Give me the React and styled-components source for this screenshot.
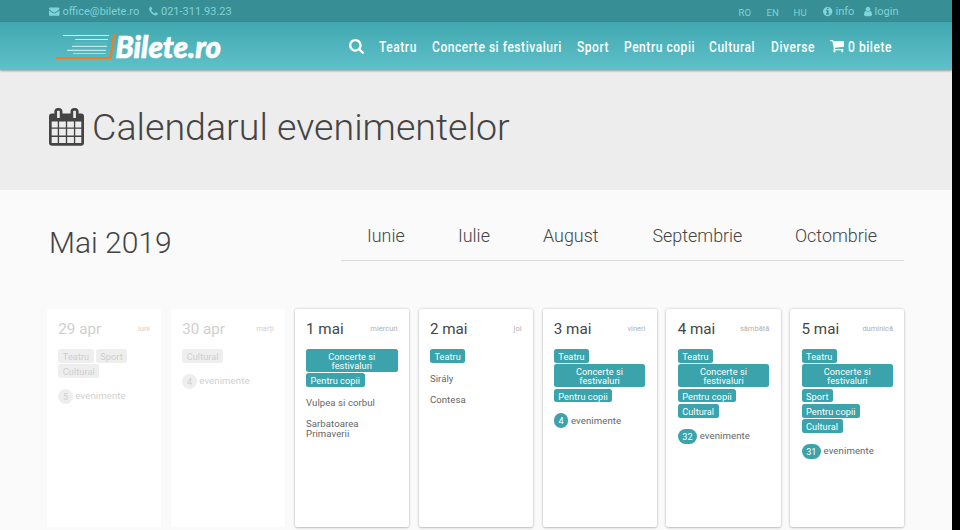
import React from "react";
import styled, { createGlobalStyle } from "styled-components";

const Global = createGlobalStyle`
  * { box-sizing: border-box; }
  html, body { margin: 0; height: 530px; overflow: hidden; background: #000; }
  body { font-family: Roboto, sans-serif; color: #444; }
`;

const Page = styled.div`
  width: 952px;
  height: 530px;
  overflow: hidden;
  background: #fafafa;
  display: flex;
  flex-direction: column;
`;

const TopBar = styled.div`
  height: 22px;
  flex: none;
  padding: 0 54px 0 49px;
  background: #378e94;
  display: flex;
  justify-content: space-between;
  color: #7fd3d9;
  font-size: 11px;
`;

const TopGroup = styled.div`
  display: flex;
  align-items: center;
`;

const TopItem = styled.span`
  display: flex;
  align-items: center;
  gap: 3px;
  height: 22px;
  padding-top: 1px;
  white-space: nowrap;
  width: ${(p) => p.$w}px;
`;

const Lang = styled.span`
  width: ${(p) => p.$w}px;
  padding-top: 3px;
  font-size: 9.5px;
`;

const Header = styled.header`
  height: 48px;
  flex: none;
  padding-left: 55px;
  display: flex;
  background: linear-gradient(#41a8af, #5fc0c9);
  box-shadow: 0 1px 2px rgba(0, 0, 0, 0.35);
  position: relative;
  color: #fff;
`;

const Logo = styled.div`
  width: 294px;
  display: flex;
  align-items: flex-start;
  padding-top: 10px;
`;

const LogoName = styled.span`
  width: 106px;
  margin: -1px 0 0 -0.5px;
  font: italic 900 29.5px/32px Lato, sans-serif;
  letter-spacing: 0.08px;
  -webkit-text-stroke: 0.7px #fff;
  white-space: nowrap;
`;

const Nav = styled.nav`
  display: flex;
  align-items: center;
  height: 49px;
`;

const NavItem = styled.a`
  width: ${(p) => p.$w}px;
  flex: none;
  display: flex;
  align-items: center;
  gap: 4px;
`;

const NavLabel = styled.span`
  display: block;
  white-space: nowrap;
  font: 500 15.5px/20px Roboto, sans-serif;
  letter-spacing: 0.7px;
  transform: scaleX(0.775);
  transform-origin: left;
`;

const Hero = styled.section`
  height: 120px;
  flex: none;
  background: #ededed;
  display: flex;
  align-items: flex-start;
  padding: 38px 0 0 49px;
  gap: 8px;
`;

const Title = styled.h1`
  margin: -3px 0 0;
  font-size: 37.6px;
  line-height: 44px;
  font-weight: 300;
  white-space: nowrap;
`;

const MonthBar = styled.section`
  display: flex;
  height: 119px;
  flex: none;
  padding: 27px 48px 0 49px;
  justify-content: space-between;
`;

const Month = styled.h2`
  margin: 7px 0 0;
  font-size: 30px;
  line-height: 37px;
  font-weight: 300;
`;

const Tabs = styled.div`
  width: 563px;
  height: 44px;
  border-bottom: 1px solid #dadada;
  padding-left: 26px;
  display: flex;
`;

const Tab = styled.a`
  width: ${(p) => p.$w}px;
  flex: none;
  font-size: 17.9px;
  line-height: 37px;
  font-weight: 300;
`;

const Days = styled.section`
  display: grid;
  grid-template-columns: repeat(7, 114.2px);
  column-gap: 9.7px;
  padding-left: 47px;
`;

const Card = styled.article`
  height: 218px;
  padding: 10px 11.3px;
  border-radius: 2px;
  background: #fff;
  color: ${(p) => (p.$past ? "#cfcfcf" : "#666")};
  box-shadow: ${(p) => (p.$past ? "none" : "0 0 3px rgba(0,0,0,0.2), 0 1px 2px rgba(0,0,0,0.16)")};
`;

const CardHead = styled.div`
  display: flex;
  justify-content: space-between;
  align-items: center;
  height: 19px;
`;

const DayName = styled.span`
  font-size: 15.2px;
  color: ${(p) => (p.$past ? "#cfcfcf" : "#444")};
`;

const Weekday = styled.span`
  font-size: 7.5px;
  color: ${(p) => (p.$past ? "#d0d0d0" : "#b0b0b0")};
`;

const Tags = styled.div`
  display: flex;
  flex-wrap: wrap;
  gap: 1.6px 2px;
  margin-top: 11.2px;
`;

const Tag = styled.span`
  padding: 2.9px 4.5px 1.8px;
  border-radius: 2.5px;
  font-size: 9.2px;
  line-height: 9px;
  letter-spacing: 0.06px;
  text-align: center;
  background: ${(p) => (p.$past ? "#eee" : "#3aa3ab")};
  color: ${(p) => (p.$past ? "#cfcfcf" : "#fff")};
`;

const Count = styled.div`
  display: flex;
  align-items: center;
  margin-top: 10.8px;
  height: 15px;
  gap: 2.5px;
  font-size: 9.6px;
  line-height: 13px;
`;

const CountLabel = styled.span`
  padding-bottom: 1px;
  letter-spacing: 0.1px;
`;

const Pill = styled.span`
  min-width: 14.6px;
  padding: 1px 4.6px 0;
  height: 15px;
  border-radius: 8px;
  font-size: 9.2px;
  line-height: 14px;
  text-align: center;
  background: ${(p) => (p.$past ? "#eee" : "#3aa3ab")};
  color: ${(p) => (p.$past ? "#cfcfcf" : "#fff")};
`;

const EventName = styled.p`
  margin: 11px 0 0;
  font-size: 9.6px;
  line-height: 10px;
  letter-spacing: 0.05px;
`;

const icons = {
  envelope: ["0 0 1792 1792", "M1792 710v794q0 66-47 113t-113 47h-1472q-66 0-113-47t-47-113v-794q44 49 101 87 362 246 497 345 57 42 92.5 65.5t94.5 48 110 24.5h2q51 0 110-24.5t94.5-48 92.5-65.5q170-123 498-345 57-39 100-87zm0-294q0 79-49 151t-122 123q-376 261-468 325-10 7-42.5 31t-54 38.5-52 32.5-57.5 27-50 9h-2q-23 0-50-9t-57.5-27-52-32.5-54-38.5-42.5-31q-91-64-262-182.5t-205-142.5q-62-42-117-115.5t-55-136.5q0-78 41.5-130t118.5-52h1472q65 0 112.5 47t47.5 113z"],
  phone: ["192 0 1408 1792", "M1600 1240q0 27-10 70.5t-21 68.5q-21 50-122 106-94 51-186 51-27 0-53-3.5t-57.5-12.5-47-14.5-55.5-20.5-49-18q-98-35-175-83-127-79-264-216t-216-264q-48-77-83-175-3-9-18-49t-20.5-55.5-14.5-47-12.5-57.5-3.5-53q0-92 51-186 56-101 106-122 25-11 68.5-21t70.5-10q14 0 21 3 18 6 53 76 11 19 30 54t35 63.5 31 53.5q3 4 17.5 25t21.5 35.5 7 28.5q0 20-28.5 50t-62 55-62 53-28.5 46q0 9 5 22.5t8.5 20.5 14 24 11.5 19q76 137 174 235t235 174q2 1 19 11.5t24 14 20.5 8.5 22.5 5q18 0 46-28.5t53-62 55-62 50-28.5q14 0 28.5 7t35.5 21.5 25 17.5q25 15 53.5 31t63.5 35 54 30q70 35 76 53 3 7 3 21z"],
  info: ["128 0 1536 1792", "M1152 1376v-160q0-14-9-23t-23-9h-96v-512q0-14-9-23t-23-9h-320q-14 0-23 9t-9 23v160q0 14 9 23t23 9h96v320h-96q-14 0-23 9t-9 23v160q0 14 9 23t23 9h448q14 0 23-9t9-23zm-128-896v-160q0-14-9-23t-23-9h-192q-14 0-23 9t-9 23v160q0 14 9 23t23 9h192q14 0 23-9t9-23zm640 416q0 209-103 385.5t-279.5 279.5-385.5 103-385.5-103-279.5-279.5-103-385.5 103-385.5 279.5-279.5 385.5-103 385.5 103 279.5 279.5 103 385.5z"],
  user: ["256 0 1280 1792", "M1536 1399q0 109-62.5 187t-150.5 78h-854q-88 0-150.5-78t-62.5-187q0-85 8.5-160.5t31.5-152 58.5-131 94-89 134.5-34.5q131 128 313 128t313-128q76 0 134.5 34.5t94 89 58.5 131 31.5 152 8.5 160.5zm-256-887q0 159-112.5 271.5t-271.5 112.5-271.5-112.5-112.5-271.5 112.5-271.5 271.5-112.5 271.5 112.5 112.5 271.5z"],
  search: ["64 128 1664 1664", "M1216 832q0-185-131.5-316.5t-316.5-131.5-316.5 131.5-131.5 316.5 131.5 316.5 316.5 131.5 316.5-131.5 131.5-316.5zm512 832q0 52-38 90t-90 38q-54 0-90-38l-343-342q-179 124-399 124-143 0-273.5-55.5t-225-150-150-225-55.5-273.5 55.5-273.5 150-225 225-150 273.5-55.5 273.5 55.5 225 150 150 225 55.5 273.5q0 220-124 399l343 343q37 37 37 90z"],
  cart: ["64 256 1664 1408", "M704 1536q0 52-38 90t-90 38-90-38-38-90 38-90 90-38 90 38 38 90zm896 0q0 52-38 90t-90 38-90-38-38-90 38-90 90-38 90 38 38 90zm128-1088v512q0 24-16.5 42.5t-40.5 21.5l-1044 122q13 60 13 70 0 16-24 64h920q26 0 45 19t19 45-19 45-45 19h-1024q-26 0-45-19t-19-45q0-11 8-31.5t16-36 21.5-40 15.5-29.5l-177-823h-204q-26 0-45-19t-19-45 19-45 45-19h256q16 0 28.5 6.5t19.5 15.5 13 24.5 8 26 5.5 29.5 4.5 26h1201q26 0 45 19t19 45z"],
  calendar: ["64 0 1664 1792", "M192 1664h288v-288h-288v288zm352 0h320v-288h-320v288zm-352-352h288v-320h-288v320zm352 0h320v-320h-320v320zm-352-384h288v-288h-288v288zm736 736h320v-288h-320v288zm-384-736h320v-288h-320v288zm768 736h288v-288h-288v288zm-384-352h320v-320h-320v320zm-352-864v-288q0-13-9.5-22.5t-22.5-9.5h-64q-13 0-22.5 9.5t-9.5 22.5v288q0 13 9.5 22.5t22.5 9.5h64q13 0 22.5-9.5t9.5-22.5zm736 864h288v-320h-288v320zm-384-384h320v-288h-320v288zm384 0h288v-288h-288v288zm32-480v-288q0-13-9.5-22.5t-22.5-9.5h-64q-13 0-22.5 9.5t-9.5 22.5v288q0 13 9.5 22.5t22.5 9.5h64q13 0 22.5-9.5t9.5-22.5zm384-64v1280q0 52-38 90t-90 38h-1408q-52 0-90-38t-38-90v-1280q0-52 38-90t90-38h128v-96q0-66 47-113t113-47h64q66 0 113 47t47 113v96h384v-96q0-66 47-113t113-47h64q66 0 113 47t47 113v96h128q52 0 90 38t38 90z"],
};

const IconSvg = styled.svg`
  display: block;
  flex: none;
  fill: currentColor;
`;

const Icon = ({ name, w, h }) => (
  <IconSvg width={w} height={h} viewBox={icons[name][0]}>
    <path d={icons[name][1]} />
  </IconSvg>
);

const LogoMark = () => (
  <IconSvg width="61" height="30" viewBox="0 0 61 30">
    <g stroke="#fff" fill="none">
      <path d="M8 3.5H54" strokeWidth="1.2" opacity=".75" />
      <path d="M20 7.5H53" strokeWidth="1.2" opacity=".75" />
      <path d="M17 14.4H52" strokeWidth="1.2" opacity=".65" />
      <path d="M12 18.4H51" strokeWidth="1.2" opacity=".65" />
      <path d="M18 11H52" opacity=".15" />
      <path d="M18 21.5H50.5" strokeWidth="1.2" opacity=".5" />
    </g>
    <path d="M1 26H55.4L59.4 1.8" stroke="#f97a1c" strokeWidth="2.2" fill="none" />
  </IconSvg>
);

const navItems = [
  ["Teatru", 53.3],
  ["Concerte si festivaluri", 144.7],
  ["Sport", 46.7],
  ["Pentru copii", 85.4],
  ["Cultural", 61.5],
  ["Diverse", 59],
];

const months = [
  ["Iunie", 91],
  ["Iulie", 85],
  ["August", 109.5],
  ["Septembrie", 142.5],
  ["Octombrie", 90],
];

const T = "Teatru", C = "Concerte si festivaluri", P = "Pentru copii", K = "Cultural", S = "Sport";

const days = [
  { day: "29 apr", name: "luni", tags: [T, S, K], count: 5, past: true },
  { day: "30 apr", name: "marți", tags: [K], count: 4, past: true },
  { day: "1 mai", name: "miercuri", tags: [C, P], events: ["Vulpea si corbul", "Sarbatoarea Primaverii"] },
  { day: "2 mai", name: "joi", tags: [T], events: ["Sirály", "Contesa"] },
  { day: "3 mai", name: "vineri", tags: [T, C, P], count: 4 },
  { day: "4 mai", name: "sâmbătă", tags: [T, C, P, K], count: 32 },
  { day: "5 mai", name: "duminică", tags: [T, C, S, P, K], count: 31 },
];

const DayCard = ({ d }) => (
  <Card $past={d.past}>
    <CardHead>
      <DayName $past={d.past}>{d.day}</DayName>
      <Weekday $past={d.past}>{d.name}</Weekday>
    </CardHead>
    <Tags>
      {d.tags.map((t) => (
        <Tag key={t} $past={d.past}>{t}</Tag>
      ))}
    </Tags>
    {d.count && (
      <Count>
        <Pill $past={d.past}>{d.count}</Pill>
        <CountLabel>evenimente</CountLabel>
      </Count>
    )}
    {d.events && d.events.map((e) => <EventName key={e}>{e}</EventName>)}
  </Card>
);

export default function App() {
  return (
    <>
      <Global />
      <Page>
        <TopBar>
          <TopGroup>
            <TopItem $w={100}><Icon name="envelope" w={10.5} h={10.5} />office@bilete.ro</TopItem>
            <TopItem $w={90}><Icon name="phone" w={9} h={11} />021-311.93.23</TopItem>
          </TopGroup>
          <TopGroup>
            <Lang $w={28}>RO</Lang>
            <Lang $w={27}>EN</Lang>
            <Lang $w={29.5}>HU</Lang>
            <TopItem $w={40.5}><Icon name="info" w={9.4} h={11} />info</TopItem>
            <TopItem $w={34.4}><Icon name="user" w={8} h={11} />login</TopItem>
          </TopGroup>
        </TopBar>
        <Header>
          <Logo>
            <LogoMark />
            <LogoName>Bilete.ro</LogoName>
          </Logo>
          <Nav>
            <NavItem $w={30}><Icon name="search" w={15} h={15} /></NavItem>
            {navItems.map(([label, w]) => (
              <NavItem key={label} $w={w}><NavLabel>{label}</NavLabel></NavItem>
            ))}
            <NavItem $w={64}><Icon name="cart" w={14.5} h={12.5} /><NavLabel>0 bilete</NavLabel></NavItem>
          </Nav>
        </Header>
        <Hero>
          <Icon name="calendar" w={35} h={37.7} />
          <Title>Calendarul evenimentelor</Title>
        </Hero>
        <MonthBar>
          <Month>Mai 2019</Month>
          <Tabs>
            {months.map(([m, w]) => <Tab key={m} $w={w}>{m}</Tab>)}
          </Tabs>
        </MonthBar>
        <Days>
          {days.map((d) => <DayCard key={d.day} d={d} />)}
        </Days>
      </Page>
    </>
  );
}
